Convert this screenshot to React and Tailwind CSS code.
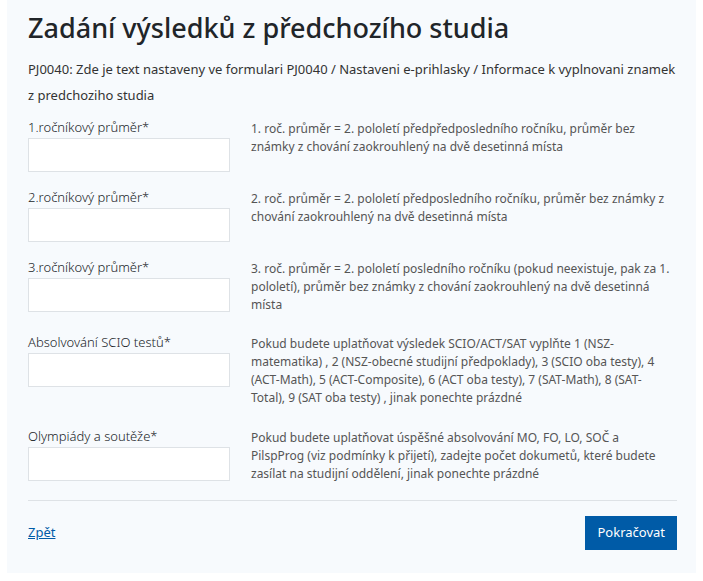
const rows = [
  {
    label: '1.ročníkový průměr*',
    help: '1. roč. průměr = 2. pololetí předpředposledního ročníku, průměr bez známky z chování zaokrouhlený na dvě desetinná místa',
    h: 'h-[70px]',
  },
  {
    label: '2.ročníkový průměr*',
    help: '2. roč. průměr = 2. pololetí předposledního ročníku, průměr bez známky z chování zaokrouhlený na dvě desetinná místa',
    h: 'h-[70px]',
  },
  {
    label: '3.ročníkový průměr*',
    help: '3. roč. průměr = 2. pololetí posledního ročníku (pokud neexistuje, pak za 1. pololetí), průměr bez známky z chování zaokrouhlený na dvě desetinná místa',
    h: 'h-[75px]',
  },
  {
    label: 'Absolvování SCIO testů*',
    help: 'Pokud budete uplatňovat výsledek SCIO/ACT/SAT vyplňte 1 (NSZ-matematika) , 2 (NSZ-obecné studijní předpoklady), 3 (SCIO oba testy), 4 (ACT-Math), 5 (ACT-Composite), 6 (ACT oba testy), 7 (SAT-Math), 8 (SAT-Total), 9 (SAT oba testy) , jinak ponechte prázdné',
    h: 'h-[94px]',
  },
  {
    label: 'Olympiády a soutěže*',
    help: 'Pokud budete uplatňovat úspěšné absolvování MO, FO, LO, SOČ a PilspProg (viz podmínky k přijetí), zadejte počet dokumetů, které budete zasílat na studijní oddělení, jinak ponechte prázdné',
    h: 'h-[66px]',
  },
];

export default function App() {
  return (
    <div className="bg-white min-h-[581px] px-[7px] pb-[6px]" style={{ fontFamily: '"Noto Sans", "Open Sans", sans-serif' }}>
      <div className="bg-[#f7fafd] pl-[21px] pr-[19px] pt-[10px] pb-[23px] text-[#212529]">
        <h1 className="text-[27px] leading-[36px] font-medium">Zadání výsledků z předchozího studia</h1>
        <p className="mt-[10px] text-[13px] leading-[26px] text-[#333]">
          PJ0040: Zde je text nastaveny ve formulari PJ0040 / Nastaveni e-prihlasky / Informace k vyplnovani znamek z predchoziho studia
        </p>
        <div className="mt-[9px]">
          {rows.map((r) => (
            <div key={r.label} className={`flex gap-[21px] ${r.h}`}>
              <div className="w-[202px] shrink-0">
                <div className="text-[13px] leading-[20px] font-light">{r.label}</div>
                <input className="mt-[1px] w-[202px] h-[34px] bg-white border border-[#dee2e6]" />
              </div>
              <div className="pt-[3px] pr-[4px] text-[12px] leading-[18px] text-[#555]">{r.help}</div>
            </div>
          ))}
        </div>
        <div className="mt-[8px] border-t border-[#dee2e6] pt-[15px] flex justify-between items-center">
          <a href="#" className="text-[13px] text-[#005ba7] underline">Zpět</a>
          <button className="h-[34px] px-[12px] bg-[#005ba7] text-white text-[13px]">Pokračovat</button>
        </div>
      </div>
    </div>
  );
}
